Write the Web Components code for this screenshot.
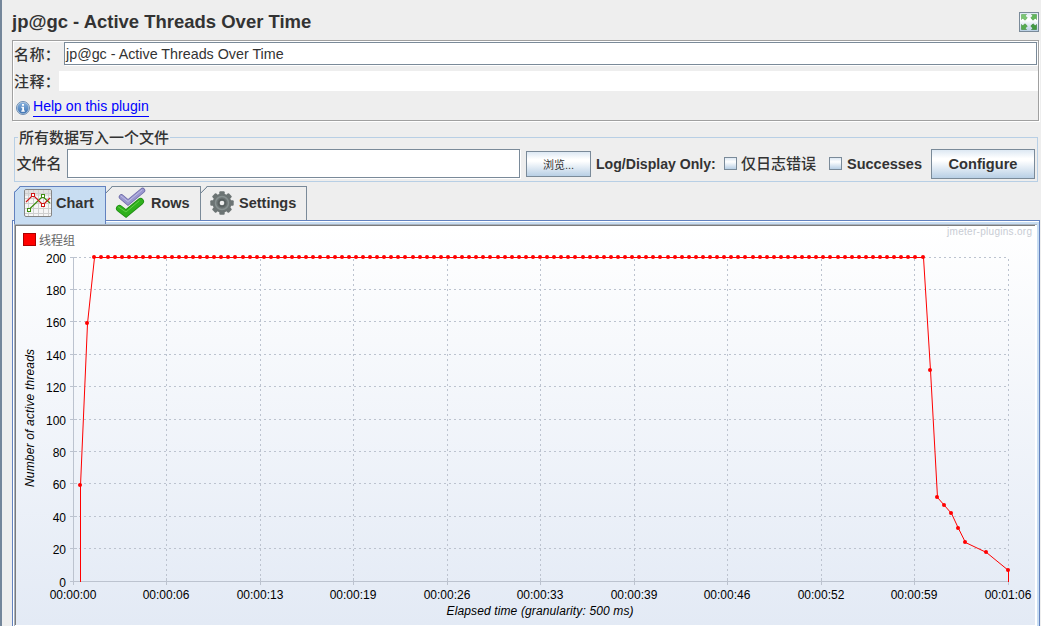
<!DOCTYPE html>
<html lang="zh-CN">
<head>
<meta charset="utf-8">
<title>jp@gc - Active Threads Over Time</title>
<style>
  html, body {
    margin: 0;
    height: 100%;
    overflow: hidden;
    background: #eee;
    color: #333;
    font-family: "Liberation Sans", "Noto Sans CJK SC", sans-serif;
  }
</style>
</head>
<body>
<thread-gui></thread-gui>

<script>
// ---- text field ----
class TextField extends HTMLElement {
  constructor() {
    super();
    this.attachShadow({ mode: 'open' }).innerHTML = `
      <style>
        :host {
          display: flex;
          align-items: center;
          box-sizing: border-box;
          background: #fff;
          border: 1px solid #7a8a99;
          box-shadow: 1px 1px #fff;
          padding-left: 1px;
          font-size: 14.3px;
          white-space: nowrap;
        }
        :host([plain]) { border: 0; box-shadow: none; }
      </style>
      <slot></slot>`;
  }
}
customElements.define('text-field', TextField);

// ---- button with the metal gradient ----
class MetalButton extends HTMLElement {
  constructor() {
    super();
    this.attachShadow({ mode: 'open' }).innerHTML = `
      <style>
        :host {
          display: flex;
          align-items: center;
          justify-content: center;
          box-sizing: border-box;
          border: 1px solid #7a8a99;
          background: linear-gradient(#dde8f3, #fff 30%, #fff 38%, #b8cfe5);
          font-weight: bold;
          font-size: 14.6px;
          white-space: nowrap;
        }
      </style>
      <slot></slot>`;
  }
}
customElements.define('metal-button', MetalButton);

// ---- checkbox ----
class CheckOption extends HTMLElement {
  constructor() {
    super();
    this.attachShadow({ mode: 'open' }).innerHTML = `
      <style>
        :host {
          display: flex;
          align-items: center;
          gap: 4px;
          white-space: nowrap;
        }
        i {
          flex: none;
          box-sizing: border-box;
          width: 13px;
          height: 13px;
          border: 1px solid #7a8a99;
          background: linear-gradient(#dde8f3, #fff 35%, #b8cfe5);
        }
      </style>
      <i></i><slot></slot>`;
  }
}
customElements.define('check-option', CheckOption);

// ---- header: title and expand button ----
class PanelHeader extends HTMLElement {
  constructor() {
    super();
    this.attachShadow({ mode: 'open' }).innerHTML = `
      <style>
        :host {
          display: flex;
          justify-content: space-between;
          box-sizing: border-box;
          height: 40px;
          padding: 12px 1px 0 0;
        }
        h1 {
          margin: 0;
          font-size: 18.48px;
          line-height: 20px;
          white-space: nowrap;
        }
        metal-button { width: 20px; height: 20px; }
        svg { display: block; }
      </style>
      <h1><slot></slot></h1>
      <metal-button>
        <svg width="18" height="18" viewBox="0 0 18 18">
          <path fill="#7cc674" stroke="#5aa755" stroke-width=".6" d="M1.5 1.5H6.5L5.2 2.8L7.3 5L5 7.2L2.8 5.2L1.5 6.5Z"/>
          <path fill="#62b75c" stroke="#4c9a48" stroke-width=".6" d="M16.5 1.5V6.5L15.2 5.2L13 7.2L10.8 5L12.8 2.8L11.5 1.5Z"/>
          <path fill="#55ac50" stroke="#3f8f3d" stroke-width=".6" d="M1.5 16.5V11.5L2.8 12.8L5 10.8L7.3 13L5.2 15.2L6.5 16.5Z"/>
          <path fill="#419a41" stroke="#2f7d31" stroke-width=".6" d="M16.5 16.5H11.5L12.8 15.2L10.8 13L13 10.8L15.2 12.8L16.5 11.5Z"/>
        </svg>
      </metal-button>`;
  }
}
customElements.define('panel-header', PanelHeader);

// ---- name / comment block ----
class NamePanel extends HTMLElement {
  constructor() {
    super();
    this.attachShadow({ mode: 'open' }).innerHTML = `
      <style>
        :host {
          display: block;
          box-sizing: border-box;
          height: 81px;
          border: 1px solid #a0a0a0;
          box-shadow: inset 1px 1px #fff, 1px 1px #fff;
          padding: 1px 0 0 1px;
        }
        .row { display: flex; align-items: center; }
        .row span {
          flex: none;
          font-size: 15px;
          font-weight: 500;
          line-height: 20px;
          letter-spacing: .4px;
          white-space: nowrap;
        }
        .name { height: 24px; padding-right: 1px; }
        .name span { width: 50px; padding-top: 1px; }
        .name text-field { flex: 1; height: 23px; margin-bottom: 1px; }
        .comment { height: 20px; margin-top: 5px; }
        .comment span { width: 45px; padding-top: 1px; }
        .comment text-field { flex: 1; height: 20px; }
        .help { gap: 3px; padding-left: 2px; margin-top: 6px; height: 20px; }
        .help a {
          color: #00f;
          border-bottom: 1px solid #00f;
          font-size: 14.07px;
          line-height: 19px;
          height: 19px;
        }
        .help svg { margin-top: 2px; }
      </style>
      <div class="row name"><span>名称：</span><text-field>jp@gc - Active Threads Over Time</text-field></div>
      <div class="row comment"><span>注释：</span><text-field plain></text-field></div>
      <div class="row help">
        <svg width="14" height="14" viewBox="0 0 14 14">
          <defs>
            <linearGradient id="ball" x2="0" y2="1">
              <stop offset="0" stop-color="#85b0dd"/><stop offset="1" stop-color="#3f74b4"/>
            </linearGradient>
          </defs>
          <circle cx="7" cy="7" r="6.5" fill="#c5d3e2" stroke="#6d8db3" stroke-width="1"/>
          <circle cx="7" cy="7" r="5.5" fill="url(#ball)"/>
          <path fill="#fff" d="M6 3H8V4.7H6ZM5.3 5.7H8V9.6H8.8V10.7H5.3V9.6H6.2V6.7H5.3Z"/>
        </svg>
        <a>Help on this plugin</a>
      </div>`;
  }
}
customElements.define('name-panel', NamePanel);

// ---- file settings ----
class FilePanel extends HTMLElement {
  constructor() {
    super();
    this.attachShadow({ mode: 'open' }).innerHTML = `
      <style>
        :host { display: block; }
        fieldset {
          box-sizing: border-box;
          height: 53px;
          margin: 0;
          padding: 0 1px 0 2px;
          border: 1px solid #b8cfe5;
          min-width: 0;
        }
        legend {
          height: 17px;
          line-height: 18px;
          padding: 0 1px;
          margin-left: 1px;
          font-size: 15px;
          font-weight: 500;
        }
        .row { display: flex; align-items: center; height: 35px; }
        .row > * { flex: none; box-sizing: border-box; }
        .cjk { width: 45px; font-size: 15px; line-height: 20px; font-weight: 500; white-space: nowrap; }
        .row > .cjk { margin-left: -.5px; margin-right: .5px; }
        .file { width: 453px; height: 29px; margin: 0 6px 0 5px; }
        .browse { width: 65px; height: 26px; font-size: 11px; font-weight: normal; margin-right: 5px; }
        b { font-size: 14.5px; white-space: nowrap; }
        .only { width: 128px; font-size: 14.1px; }
        .errors { width: 105px; }
        .ok { width: 102px; gap: 5px; }
        .conf { width: 104px; height: 30px; }
      </style>
      <fieldset>
        <legend>所有数据写入一个文件</legend>
        <div class="row">
          <span class="cjk">文件名</span>
          <text-field class="file"></text-field>
          <metal-button class="browse">浏览...</metal-button>
          <b class="only">Log/Display Only:</b>
          <check-option class="errors"><span class="cjk">仅日志错误</span></check-option>
          <check-option class="ok"><b>Successes</b></check-option>
          <metal-button class="conf">Configure</metal-button>
        </div>
      </fieldset>`;
  }
}
customElements.define('file-panel', FilePanel);

// ---- one tab with a cut corner ----
class TabItem extends HTMLElement {
  constructor() {
    super();
    this.attachShadow({ mode: 'open' }).innerHTML = `
      <style>
        :host {
          --line: #7a8a99;
          --fill: #eee;
          display: flex;
          align-items: center;
          box-sizing: border-box;
          height: 34px;
          border: 1px solid var(--line);
          border-width: 1px 1px 0 0;
          padding-bottom: 1px;
          background:
            linear-gradient(135deg, transparent 4.2px, var(--line) 4.3px, var(--line) 5.2px, transparent 5.3px)
            0 0 / 9px 9px no-repeat border-box,
            var(--fill);
          clip-path: polygon(6px 0, 100% 0, 100% 100%, 0 100%, 0 6px);
          font-weight: bold;
          font-size: 14.5px;
          white-space: nowrap;
        }
        :host([selected]) {
          --line: #6382bf;
          --fill: #c8ddf2;
          height: 38px;
          padding-bottom: 5px;
          border-left-width: 1px;
        }
      </style>
      <slot name="icon"></slot><slot></slot>`;
  }
}
customElements.define('tab-item', TabItem);

// ---- chart ----
class ThreadsChart extends HTMLElement {
  constructor() {
    super();
    this.attachShadow({ mode: 'open' });
    this.shadowRoot.innerHTML = `
      <style>
        :host { display: block; background: linear-gradient(#fff, #e3eaf5); }
        svg { display: block; }
        text { font: 12px "Liberation Sans", "Noto Sans CJK SC", sans-serif; fill: #000; }
        .title { font-style: italic; }
        .legend { fill: #666; }
        .mark { font: 10px "Liberation Sans", sans-serif; fill: #c8ccd4; }
        .grid { stroke: #bcc3cf; stroke-dasharray: 2 3; fill: none; }
        .axis { stroke: #bcc3cf; fill: none; }
        .series { stroke: #f00; fill: none; }
      </style>
      <svg width="1019" height="399">${this.draw()}</svg>`;
  }

  draw() {
    const left = 57, right = 992, top = 31, bottom = 355;
    const times = ['00:00:00', '00:00:06', '00:00:13', '00:00:19', '00:00:26', '00:00:33',
      '00:00:39', '00:00:46', '00:00:52', '00:00:59', '00:01:06'];
    let out = '';

    for (let i = 0; i <= 10; i++) {
      const y = Math.floor(bottom - i * 32.4) + 0.5;
      const x = Math.floor(left + i * 93.5) + 0.5;
      if (i > 0) {
        out += `<path class="grid" d="M${left + 6} ${y}H${right}M${x} ${bottom - 5}V${top}"/>`;
      }
      out += `<path class="axis" d="M${left - 3} ${y}h7M${x} ${bottom - 3}v7"/>`;
      out += `<text x="50" y="${y + 5.5}" text-anchor="end">${i * 20}</text>`;
      out += `<text x="${x - 0.5}" y="373" text-anchor="middle">${times[i]}</text>`;
    }
    out += `<path class="axis" d="M${left + 0.5} ${top}V${bottom + 0.5}H${right}"/>`;

    // samples: [half-second index, threads]
    const samples = [[1, 59], [2, 159]];
    for (let k = 3; k <= 120; k++) samples.push([k, 200]);
    samples.push([121, 130], [122, 52], [123, 47], [124, 42], [125, 33], [126, 24], [129, 18], [132, 7]);

    const pts = samples.map(([k, v]) => [
      Math.floor(left + k * 935 / 132) + 0.5,
      Math.round(bottom - v * 1.62) + 0.5
    ]);
    const line = pts.map(p => p.join(' ')).join('L');
    out += `<path class="series" d="M${pts[0][0]} ${bottom + 1}L${line}V${bottom + 1}"/>`;
    out += pts.map(([x, y]) => `<circle cx="${x - 0.5}" cy="${y - 0.5}" r="2" fill="#f00"/>`).join('');

    out += `
      <rect x="7.5" y="7.5" width="12" height="12" fill="#f00" stroke="#a00"/>
      <text class="legend" x="23" y="19">线程组</text>
      <text class="mark" x="931" y="9" textLength="85">jmeter-plugins.org</text>
      <text class="title" x="524" y="389" text-anchor="middle" textLength="187">Elapsed time (granularity: 500 ms)</text>
      <text class="title" transform="translate(18 192) rotate(-90)" text-anchor="middle" textLength="138">Number of active threads</text>`;
    return out;
  }
}
customElements.define('threads-chart', ThreadsChart);

// ---- tabs with the chart below ----
class TabsPane extends HTMLElement {
  constructor() {
    super();
    let teeth = '';
    for (let a = 0; a < 360; a += 45) {
      teeth += `<rect x="9.3" y="0.3" width="5.4" height="7" rx="1" transform="rotate(${a} 12 12)"/>`;
    }
    this.attachShadow({ mode: 'open' }).innerHTML = `
      <style>
        :host { display: block; }
        nav { display: flex; align-items: flex-start; height: 34px; padding-left: 2px; }
        svg { display: block; flex: none; }
        .t1 { width: 92px; padding-left: 9px; z-index: 1; }
        .t2 { width: 95px; padding-left: 9px; }
        .t3 { width: 106px; padding-left: 9px; }
        .t1 svg { margin: 0 4px 0 0; }
        .t2 svg { margin: 0 5px 0 0; }
        .t3 svg { margin-right: 5px; }
        .pane {
          box-sizing: border-box;
          height: 406px;
          border: 1px solid #6382bf;
          border-bottom: 0;
          padding: 3px 2px 0 1px;
          background: #c8ddf2;
          box-shadow: inset 1px 1px #fff;
        }
        .inner {
          box-sizing: border-box;
          height: 402px;
          border: 1px solid #a9b3bf;
          border-width: 1px 0 0 1px;
          background: #fff;
        }
        threads-chart {
          border: 1px solid #7b7b7b;
          border-width: 1px 0 0 1px;
          margin-right: 2px;
          height: 399px;
        }
      </style>
      <nav>
        <tab-item class="t1" selected>
          <svg slot="icon" width="28" height="28" viewBox="0 0 28 28" fill="none">
            <rect x=".5" y=".5" width="27" height="27" rx="1.5" fill="#f6f6f6" stroke="#858585"/>
            <path fill="#d8d8d8" d="M1 1H27V7H1Z" opacity=".7"/>
            <path stroke="#cfcfcf" d="M4.5 1V27M9.5 1V27M14.5 1V27M19.5 1V27M24.5 1V27M1 4.500H27M1 9.500H27M1 14.500H27M1 19.500H27M1 24.500H27"/>
            <path stroke="#3d8d10" stroke-width="1.200" d="M5 20.500L18.500 7.500L26 14"/>
            <path stroke="#d01818" stroke-width="1.200" d="M2 13L9 6L19 16L26 9"/>
            <g fill="#fff" stroke="#d01818"><rect x="7.500" y="4.500" width="3" height="3"/><rect x="17.500" y="14.500" width="3" height="3"/></g>
            <g fill="#fff" stroke="#3d8d10"><rect x="17.500" y="5.500" width="3" height="3"/><rect x="3.500" y="19.500" width="3" height="3"/></g>
          </svg>
          Chart
        </tab-item>
        <tab-item class="t2">
          <svg slot="icon" width="31" height="32" viewBox="0 0 31 32" fill="none" stroke-linecap="round">
            <path stroke="#1f8a14" stroke-width="7" d="M4.500 21.500L11 26.500L25.500 14.500"/>
            <path stroke="#2fb01c" stroke-width="5.500" d="M4.500 21.500L11 26.500L25.500 14.500"/>
            <path stroke="#62cf48" d="M3.500 20L11 25L24 14"/>
            <path stroke="#6e6ba8" stroke-width="5.500" d="M6.500 10L13 15.500L27.500 3.500"/>
            <path stroke="#9a97cf" stroke-width="4" d="M6.500 10L13 15.500L27.500 3.500"/>
            <path stroke="#bfbde6" d="M6 9L13 14.500L27 3"/>
          </svg>
          Rows
        </tab-item>
        <tab-item class="t3">
          <svg slot="icon" width="24" height="24" viewBox="0 0 24 24" fill="#6c7474">
            ${teeth}
            <circle cx="12" cy="12" r="9.500"/>
            <circle cx="12" cy="12" r="6.500" fill="none" stroke="#879090" stroke-width="1.500"/>
            <circle cx="12" cy="12" r="4.300" fill="#596161"/>
            <circle cx="12" cy="12" r="2.300" fill="#eee"/>
          </svg>
          Settings
        </tab-item>
      </nav>
      <div class="pane"><div class="inner"><threads-chart></threads-chart></div></div>`;
  }
}
customElements.define('tabs-pane', TabsPane);

// ---- whole window ----
class ThreadGui extends HTMLElement {
  constructor() {
    super();
    this.attachShadow({ mode: 'open' }).innerHTML = `
      <style>
        :host {
          display: block;
          box-sizing: border-box;
          height: 626px;
          border-left: 2px solid #74869a;
          padding: 0 1px 0 10px;
        }
        name-panel { margin-right: 1px; }
        file-panel { margin: 8px 2px 4px; }
      </style>
      <panel-header>jp@gc - Active Threads Over Time</panel-header>
      <name-panel></name-panel>
      <file-panel></file-panel>
      <tabs-pane></tabs-pane>`;
  }
}
customElements.define('thread-gui', ThreadGui);
</script>
</body>
</html>
